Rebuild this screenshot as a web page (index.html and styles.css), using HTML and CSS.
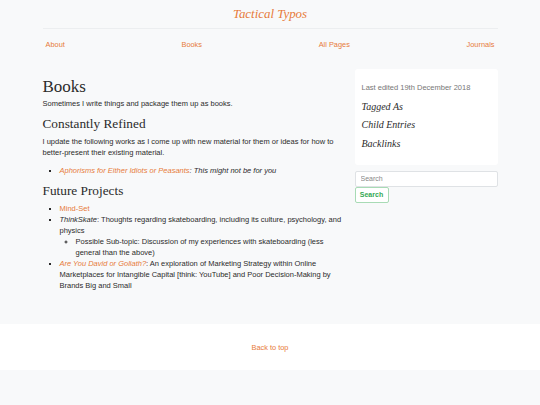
FILE: index.html
```html
<!DOCTYPE html>
<html lang="en">
<head>
<meta charset="utf-8">
<title>Books - Tactical Typos</title>
<link rel="stylesheet" href="styles.css">
</head>
<body>
<header class="site-header">
  <div class="container">
    <h1 class="site-title"><a href="#">Tactical Typos</a></h1>
    <hr class="rule">
    <nav class="site-nav">
      <a href="#">About</a>
      <a href="#">Books</a>
      <a href="#">All Pages</a>
      <a href="#">Journals</a>
    </nav>
  </div>
</header>
<div class="container layout">
  <main class="content">
    <h1 class="page-title">Books</h1>
    <p>Sometimes I write things and package them up as books.</p>
    <h2>Constantly Refined</h2>
    <p>I update the following works as I come up with new material for them or ideas for how to better-present their existing material.</p>
    <ul>
      <li><em><a href="#">Aphorisms for Either Idiots or Peasants</a>: This might not be for you</em></li>
    </ul>
    <h2>Future Projects</h2>
    <ul class="tight">
      <li><a href="#">Mind-Set</a></li>
      <li><em>ThinkSkate</em>: Thoughts regarding skateboarding, including its culture, psychology, and physics
        <ul>
          <li>Possible Sub-topic: Discussion of my experiences with skateboarding (less general than the above)</li>
        </ul>
      </li>
      <li><em><a href="#">Are You David or Goliath?</a></em>: An exploration of Marketing Strategy within Online Marketplaces for Intangible Capital [think: YouTube] and Poor Decision-Making by Brands Big and Small</li>
    </ul>
  </main>
  <aside class="sidebar">
    <div class="card">
      <p class="meta">Last edited 19th December 2018</p>
      <h3>Tagged As</h3>
      <h3>Child Entries</h3>
      <h3>Backlinks</h3>
    </div>
    <form class="search">
      <input type="text" placeholder="Search" class="search-input">
      <button type="button" class="search-btn">Search</button>
    </form>
  </aside>
</div>
<footer class="site-footer">
  <a href="#">Back to top</a>
</footer>
</body>
</html>
```

FILE: styles.css
```css
html, body {
  margin: 0;
  padding: 0;
}
body {
  background: #f8f9fa;
  color: #2b2b2b;
  font-family: "Liberation Sans", Arial, sans-serif;
  font-size: 7.5px;
  line-height: 11px;
}
a {
  color: #e77b3a;
  text-decoration: none;
}
.container {
  width: 455px;
  margin: 0 auto;
}
.site-header {
  padding-top: 5px;
}
.site-title {
  margin: 0;
  text-align: center;
  font-family: "Liberation Serif", "Times New Roman", serif;
  font-style: italic;
  font-weight: normal;
  font-size: 12.9px;
  line-height: 18px;
}
.rule {
  border: 0;
  border-top: 1px solid #eceef0;
  margin: 5px 0 0;
}
.site-nav {
  display: flex;
  justify-content: space-between;
  padding: 10px 3px 0;
  font-size: 7.4px;
}
.layout {
  display: grid;
  grid-template-columns: 304px 143px;
  column-gap: 8px;
  margin-top: 19px;
  align-items: start;
}
.content h1, .content h2 {
  font-family: "Liberation Serif", "Times New Roman", serif;
  font-weight: normal;
  color: #2b2b2b;
  line-height: 1.2;
}
.page-title {
  font-size: 17px;
  margin: 8px 0 1px;
}
.content h2 {
  font-size: 13.3px;
  margin: 0 0 3.5px;
}
.content p {
  margin: 0 0 7px;
  max-width: 298px;
}
.content ul {
  margin: 0 0 7.5px;
  padding-left: 17px;
  list-style: square;
}
.content ul ul {
  margin: 0;
  padding-left: 16px;
  list-style: circle;
}
.content h2 + .tight {
  margin-top: 0.5px;
}
.card {
  background: #fff;
  border-radius: 3px;
  padding: 13px 7px 8.5px;
}
.meta {
  margin: 0 0 7.5px;
  color: #777;
}
.card h3 {
  margin: 0 0 6.5px;
  font-family: "Liberation Serif", "Times New Roman", serif;
  font-style: italic;
  font-weight: normal;
  font-size: 10px;
  line-height: 12px;
  color: #2b2b2b;
}
.search {
  margin: 6px 0 0;
}
.search-input {
  display: block;
  box-sizing: border-box;
  width: 100%;
  height: 16px;
  margin: 0;
  padding: 0 5px;
  border: 1px solid #dfe2e5;
  border-radius: 2px;
  background: #fff;
  font-family: "Liberation Sans", Arial, sans-serif;
  font-size: 7px;
  color: #333;
}
.search-input::placeholder {
  color: #888;
}
.search-btn {
  display: block;
  box-sizing: border-box;
  height: 16px;
  width: 34px;
  margin: 0;
  padding: 0;
  border: 1px solid #a8dbb5;
  border-radius: 2px;
  background: #fff;
  color: #34a853;
  font-family: "Liberation Sans", Arial, sans-serif;
  font-weight: bold;
  font-size: 7px;
}
.site-footer {
  margin-top: 26px;
  background: #fff;
  height: 46px;
  display: flex;
  align-items: center;
  justify-content: center;
  font-size: 7.4px;
}
```
